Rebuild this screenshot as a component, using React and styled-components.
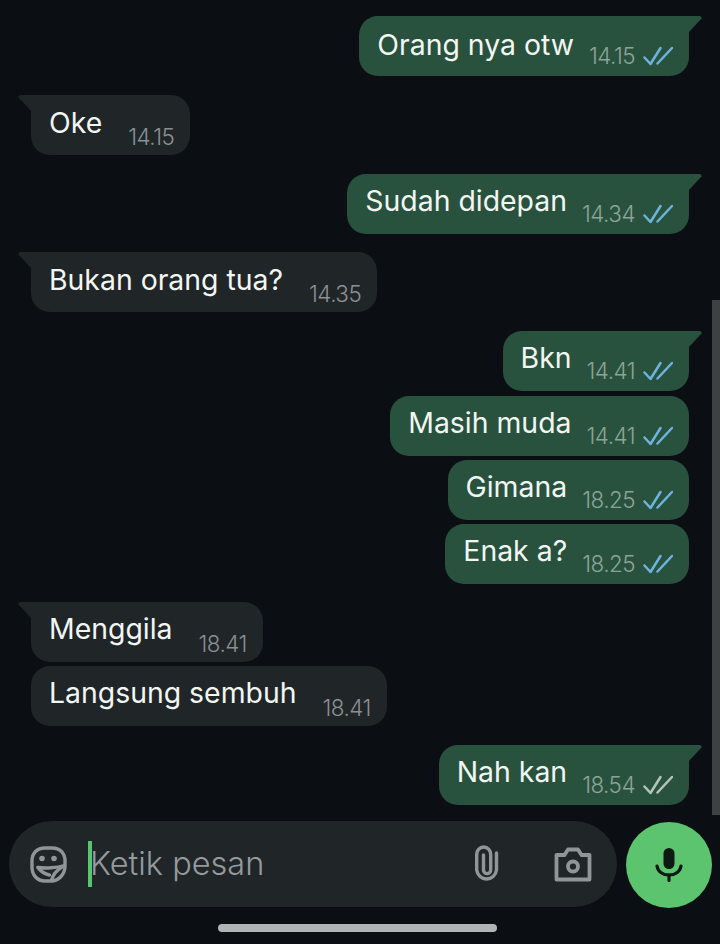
import React from "react";
import styled, { createGlobalStyle } from "styled-components";

const Global = createGlobalStyle`
  html, body { margin: 0; padding: 0; background: #0b0f13; }
  body { font-family: Inter, Roboto, "Noto Sans", sans-serif; }
`;

const Screen = styled.div`
  position: relative;
  width: 720px;
  height: 944px;
  overflow: hidden;
  background: #0b0f13;
  display: flex;
  flex-direction: column;
`;

const Messages = styled.div`
  display: flex;
  flex-direction: column;
  padding: 16px 31px 0;
  height: 805px;
  box-sizing: border-box;
`;

const Bubble = styled.div`
  position: relative;
  align-self: ${(p) => (p.$out ? "flex-end" : "flex-start")};
  margin-top: ${(p) => p.$gap}px;
  height: 60px;
  box-sizing: border-box;
  display: flex;
  border-radius: 19px;
  padding: 0 16px 0 18px;
  background: ${(p) => (p.$out ? "#29523e" : "#202528")};

  ${(p) =>
    p.$tail &&
    (p.$out
      ? `border-top-right-radius: 0;
         &::before {
           content: "";
           position: absolute;
           top: 0;
           right: -13px;
           width: 14px;
           height: 17px;
           background: #29523e;
           clip-path: polygon(0 0, 86% 0, 100% 12%, 0 100%);
         }`
      : `border-top-left-radius: 0;
         &::before {
           content: "";
           position: absolute;
           top: 0;
           left: -13px;
           width: 14px;
           height: 17px;
           background: #202528;
           clip-path: polygon(14% 0, 100% 0, 100% 100%, 0 12%);
         }`)}
`;

const Text = styled.span`
  color: #f2f6f3;
  font-size: 28.4px;
  line-height: 34px;
  margin-top: ${(p) => p.$top}px;
  white-space: nowrap;
`;

const Meta = styled.div`
  display: flex;
  align-items: center;
  align-self: flex-start;
  margin-top: ${(p) => p.$top}px;
  margin-left: ${(p) => p.$left}px;
  gap: 8px;
`;

const Time = styled.span`
  color: ${(p) => (p.$out ? "#8ba497" : "#8b9093")};
  font-size: 22.4px;
  font-weight: 300;
  line-height: 28px;
  letter-spacing: -0.5px;
`;

const Composer = styled.div`
  display: flex;
  align-items: center;
  gap: 9px;
  padding: 16px 8px 0 9px;
`;

const Field = styled.div`
  width: 608px;
  height: 86px;
  border-radius: 43px;
  background: #202528;
  display: flex;
  align-items: center;
  padding: 0 25px 0 21px;
  box-sizing: border-box;
`;

const Caret = styled.span`
  width: 4px;
  height: 46px;
  background: #5bc470;
  margin-left: 21px;
`;

const Placeholder = styled.span`
  flex: 1;
  color: #959a9d;
  font-size: 32.5px;
  font-weight: 300;
  line-height: 40px;
  margin-left: -2px;
`;

const Mic = styled.button`
  width: 86px;
  height: 86px;
  border: 0;
  padding: 0;
  border-radius: 50%;
  background: #5cc46f;
  display: flex;
  align-items: center;
  justify-content: center;
  transform: translateY(1px);
`;

const IconSlot = styled.span`
  display: flex;
  margin-left: ${(p) => p.$left || 0}px;
`;

const HomeBar = styled.div`
  margin: 17px 0 0 218px;
  width: 279px;
  height: 8px;
  border-radius: 4px;
  background: #b1b4b6;
`;

const Scrollbar = styled.div`
  position: absolute;
  right: 0;
  top: 300px;
  width: 8px;
  height: 515px;
  background: #3d4144;
`;

const Ticks = ({ color }) => (
  <svg width="30" height="20" viewBox="0 0 30 20" fill="none" stroke={color} strokeWidth="2.5" strokeLinecap="round" strokeLinejoin="round">
    <path d="M1.5 11.5 L7.5 18 L17.5 2" />
    <path d="M14.5 17.5 L29 2" />
  </svg>
);

const Sticker = () => (
  <svg width="37" height="37" viewBox="0 0 37 37" fill="none" stroke="#909598" strokeWidth="3.4" strokeLinejoin="round" strokeLinecap="round">
    <path d="M15 2 H22 C30 2 35 7 35 15 V20 C35 28 29 35 21 35 H15 C7 35 2 29 2 21 V15 C2 7 7 2 15 2 Z" />
    <path d="M8 21.5 C15 22.5 27 22 34.5 19.5" />
    <path d="M8 21.5 C11 26 15 28 19.5 29" />
    <path d="M32 21 C27 24 23 28 21.5 34.5" />
    <circle cx="12" cy="12.5" r="2.8" fill="#909598" stroke="none" />
    <circle cx="24" cy="12.5" r="2.8" fill="#909598" stroke="none" />
  </svg>
);

const Clip = () => (
  <svg width="24" height="38" viewBox="0 0 24 38" fill="none" stroke="#909598" strokeWidth="3.4" strokeLinecap="round">
    <path d="M21.5 8 V25 A10 10.5 0 0 1 1.7 25 V9.5 A7 7.5 0 0 1 15.7 9.5 V25 A3.6 3.6 0 0 1 8.5 25 V10" />
  </svg>
);

const Camera = () => (
  <svg width="38" height="35" viewBox="0 0 38 35" fill="none" stroke="#909598" strokeWidth="3.8" strokeLinejoin="round">
    <path d="M2.5 8 H10.5 L14 2.5 H24 L27.5 8 H35.5 V32.5 H2.5 Z" />
    <circle cx="19" cy="19.5" r="5" />
  </svg>
);

const MicIcon = () => (
  <svg width="28" height="34" viewBox="0 0 28 34" fill="none" stroke="#0c1a11" strokeWidth="3.2" strokeLinecap="round">
    <rect x="8.5" y="0" width="11" height="21" rx="5.5" fill="#0c1a11" stroke="none" />
    <path d="M2 18 C3 24 8 27 14 27 C20 27 25 24 26 18" />
    <path d="M14 27 V32.5" />
  </svg>
);

const rows = [
  { out: true, text: "Orang nya otw", time: "14.15", tick: "#6db4dc", tail: true, gap: 0, left: 15, top: 26, textTop: 12 },
  { text: "Oke", time: "14.15", tail: true, gap: 19, left: 26, top: 28, textTop: 11 },
  { out: true, text: "Sudah didepan", time: "14.34", tick: "#6db4dc", tail: true, gap: 19, left: 15, top: 26, textTop: 10 },
  { text: "Bukan orang tua?", time: "14.35", tail: true, gap: 18, left: 26, top: 28, textTop: 11 },
  { out: true, text: "Bkn", time: "14.41", tick: "#6db4dc", tail: true, gap: 19, left: 15, top: 26, textTop: 10 },
  { out: true, text: "Masih muda", time: "14.41", tick: "#6db4dc", gap: 5, left: 15, top: 26, textTop: 10 },
  { out: true, text: "Gimana", time: "18.25", tick: "#6db4dc", gap: 4, left: 15, top: 26, textTop: 10 },
  { out: true, text: "Enak a?", time: "18.25", tick: "#6db4dc", gap: 4, left: 15, top: 26, textTop: 10 },
  { text: "Menggila", time: "18.41", tail: true, gap: 18, left: 26, top: 28, textTop: 10 },
  { text: "Langsung sembuh", time: "18.41", gap: 4, left: 26, top: 28, textTop: 10 },
  { out: true, text: "Nah kan", time: "18.54", tick: "#b5c4bb", tail: true, gap: 19, left: 15, top: 26, textTop: 10 },
];

export default function App() {
  return (
    <Screen>
      <Global />
      <Messages>
        {rows.map((r, i) => (
          <Bubble key={i} $out={r.out} $tail={r.tail} $gap={r.gap}>
            <Text $top={r.textTop}>{r.text}</Text>
            <Meta $left={r.left} $top={r.top}>
              <Time $out={r.out}>{r.time}</Time>
              {r.tick && <Ticks color={r.tick} />}
            </Meta>
          </Bubble>
        ))}
      </Messages>
      <Composer>
        <Field>
          <Sticker />
          <Caret />
          <Placeholder>Ketik pesan</Placeholder>
          <IconSlot><Clip /></IconSlot>
          <IconSlot $left={55}><Camera /></IconSlot>
        </Field>
        <Mic><MicIcon /></Mic>
      </Composer>
      <HomeBar />
      <Scrollbar />
    </Screen>
  );
}
